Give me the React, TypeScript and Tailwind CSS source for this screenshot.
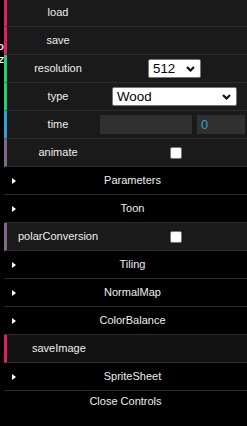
import React from 'react';

const font = { fontFamily: '"Liberation Sans", Arial, sans-serif' };

function Chevron() {
  return (
    <svg width="9" height="6" viewBox="0 0 9 6" className="shrink-0">
      <path d="M1 1 L4.5 4.5 L8 1" fill="none" stroke="#111" strokeWidth="2.2" />
    </svg>
  );
}

function Select({ value, className }: { value: string; className: string }) {
  return (
    <div
      className={`h-[19px] bg-white border border-[#767676] rounded-[2px] flex items-center justify-between pl-[4px] pr-[5px] text-[13.33px] text-black ${className}`}
    >
      <span>{value}</span>
      <Chevron />
    </div>
  );
}

function Checkbox({ className }: { className: string }) {
  return <div className={`w-[12px] h-[12px] bg-white border border-[#767676] rounded-[2px] ${className}`} />;
}

function Row({ color, label, children, bg = 'bg-[#1a1a1a]' }: { color: string; label: string; children?: React.ReactNode; bg?: string }) {
  return (
    <div className={`flex items-center h-[28px] border-b border-[#2c2c2c] border-l-[3px] ${color} ${bg}`}>
      <div className="w-[102px] shrink-0 text-center text-[#eee]">{label}</div>
      <div className="flex-1 flex items-center">{children}</div>
    </div>
  );
}

function Folder({ title }: { title: string }) {
  return (
    <div className="flex items-center h-[28px] border-b border-[#2c2c2c] bg-black">
      <div className="w-[8px] shrink-0" />
      <div className="w-0 h-0 border-y-[3px] border-y-transparent border-l-[4px] border-l-white shrink-0" />
      <div className="flex-1 text-center text-[#eee] pl-[2px]">{title}</div>
    </div>
  );
}

export default function App() {
  return (
    <div className="w-[247px] h-[426px] bg-black flex overflow-hidden text-[11px]" style={font}>
      <div className="w-[4px] shrink-0 overflow-hidden flex flex-col items-end">
        <div className="h-[41px]" />
        <span className="text-[11px] leading-[10px] text-[#f6d6e0] font-bold">o</span>
        <div className="h-[5px]" />
        <span className="text-[9px] leading-[8px] text-white font-bold">Z</span>
      </div>

      <div className="flex-1 -mt-px flex flex-col">
        <Row color="border-l-[#e61d5f]" label="load" />
        <Row color="border-l-[#e61d5f]" label="save" />
        <Row color="border-l-[#1ed36f]" label="resolution">
          <Select value="512" className="w-[53px] ml-[39px]" />
        </Row>
        <Row color="border-l-[#1ed36f]" label="type">
          <Select value="Wood" className="w-[125px] ml-[3px]" />
        </Row>
        <Row color="border-l-[#2fa1d6]" label="time">
          <div className="w-[92px] h-[19px] bg-[#303030] -ml-[9px]" />
          <div className="w-[48px] h-[19px] bg-[#303030] ml-[5px] text-[#2fa1d6] text-[13px] pl-[4px] leading-[19px]">0</div>
        </Row>
        <Row color="border-l-[#806787]" label="animate">
          <Checkbox className="ml-[61px]" />
        </Row>
        <Folder title="Parameters" />
        <Folder title="Toon" />
        <div className="flex items-center h-[28px] border-b border-[#2c2c2c] border-l-[3px] border-l-[#806787] bg-[#1a1a1a]">
          <div className="w-[151px] shrink-0 pl-[11px] text-[#eee]">polarConversion</div>
          <Checkbox className="ml-[12px]" />
        </div>
        <Folder title="Tiling" />
        <Folder title="NormalMap" />
        <Folder title="ColorBalance" />
        <div className="flex items-center h-[28px] border-b border-[#2c2c2c] border-l-[3px] border-l-[#e61d5f] bg-[#121212]">
          <div className="pl-[25px] text-[#eee]">saveImage</div>
        </div>
        <Folder title="SpriteSheet" />
        <div className="h-[20px] flex items-center justify-center text-[#eee]">Close Controls</div>
      </div>
    </div>
  );
}
